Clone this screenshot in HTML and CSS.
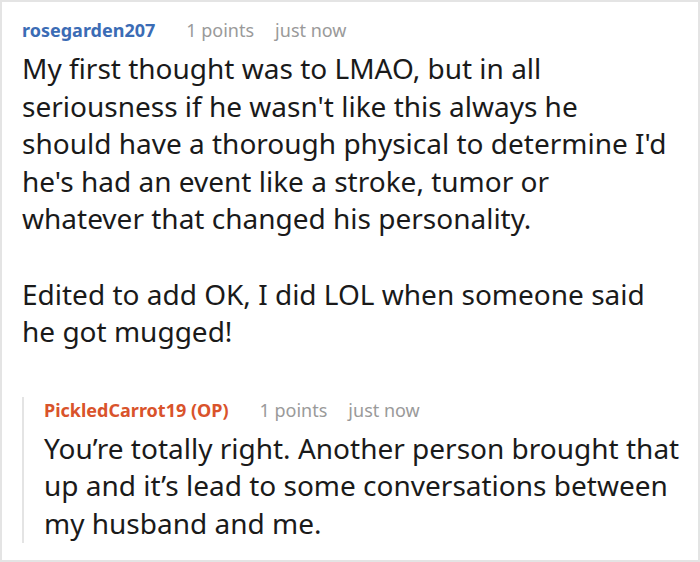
FILE: index.html
```html
<!DOCTYPE html>
<html>
<head>
<meta charset="utf-8">
<link rel="stylesheet" href="styles.css">
</head>
<body>
<div class="thread">
  <div class="comment">
    <div class="meta">
      <span class="author">rosegarden207</span>
      <span class="points">1 points</span>
      <span class="time">just now</span>
    </div>
    <div class="text">
      <p>My first thought was to LMAO, but in all seriousness if he wasn't like this always he should have a thorough physical to determine I'd he's had an event like a stroke, tumor or whatever that changed his personality.</p>
      <p>Edited to add OK, I did LOL when someone said he got mugged!</p>
    </div>
    <div class="reply">
      <div class="meta">
        <span class="author op">PickledCarrot19 (OP)</span>
        <span class="points">1 points</span>
        <span class="time">just now</span>
      </div>
      <div class="text">
        <p>You’re totally right. Another person brought that up and it’s lead to some conversations between my husband and me.</p>
      </div>
    </div>
  </div>
</div>
</body>
</html>
```

FILE: styles.css
```css
html, body {
  margin: 0;
  padding: 0;
  background: #fff;
}
.thread {
  box-sizing: border-box;
  width: 700px;
  height: 562px;
  border: 2px solid #e4e4e4;
  padding: 15px 6px 0 20px;
  font-family: "Noto Sans", "Open Sans", sans-serif;
  color: #1a1a1a;
  overflow: hidden;
}
.meta {
  font-size: 18px;
  line-height: 26px;
  display: flex;
  align-items: baseline;
}
.author {
  font-weight: bold;
  color: #3b6cb5;
}
.author.op {
  color: #d9532b;
}
.points {
  color: #9a9a9a;
  margin-left: 31px;
}
.time {
  color: #9a9a9a;
  margin-left: 21px;
}
.text {
  font-size: 28px;
  line-height: 37.6px;
  margin-top: 7px;
  max-width: 650px;
}
.reply .text {
  margin-top: 7px;
}
.text p {
  margin: 0 0 37.6px 0;
}
.text p:last-child {
  margin-bottom: 0;
}
.reply {
  margin-top: 46px;
  border-left: 2px solid #e4e4e4;
  padding-left: 20px;
}
```
